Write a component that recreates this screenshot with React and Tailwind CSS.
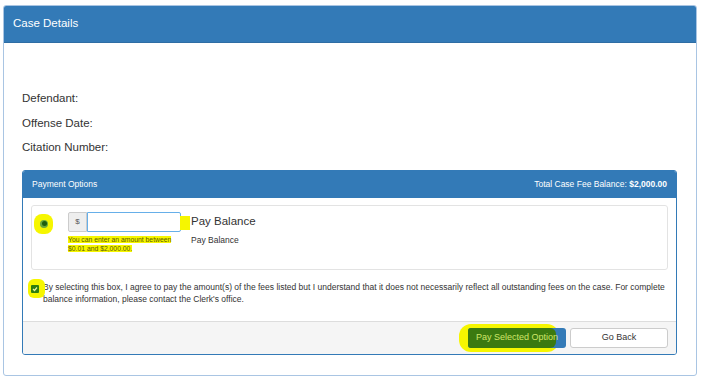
export default function App() {
  return (
    <div className="w-[706px] h-[378px] bg-white pt-[5px] pl-[3px] font-['Liberation_Sans',Arial,sans-serif]">
      <div className="w-[694px] h-[371px] border border-[#a9c5e3] rounded-[3px] overflow-hidden">
        {/* outer header */}
        <div className="h-[37px] bg-[#337ab7] border-b border-[#2e6da4] flex items-center pl-[9px]">
          <span className="text-white text-[11.5px]">Case Details</span>
        </div>

        <div className="pt-[43px] pl-[18px] pr-[19px]">
          <div className="text-[11.5px] text-[#333] leading-[24.5px]">
            <div>Defendant:</div>
            <div>Offense Date:</div>
            <div>Citation Number:</div>
          </div>

          {/* payment options panel */}
          <div className="mt-[10px] border border-[#337ab7] rounded-[3px] overflow-hidden">
            <div className="h-[27px] bg-[#337ab7] flex items-center justify-between px-[9px] text-white text-[8.5px]">
              <span>Payment Options</span>
              <span>
                Total Case Fee Balance: <b>$2,000.00</b>
              </span>
            </div>

            <div className="px-[8px] pt-[7px]">
              <div className="h-[65px] border border-[#e3e3e3] rounded-[3px] flex pt-[6px]">
                {/* radio */}
                <div className="relative w-[36px] shrink-0">
                  <div className="absolute left-[2px] top-[2px] w-[19px] h-[20px] rounded-[8px] bg-[#f6f600]" />
                  <div className="absolute left-[8px] top-[8px] w-[8px] h-[8px] rounded-full bg-[#6aa83c] flex items-center justify-center">
                    <div className="w-[5px] h-[5px] rounded-full bg-[#1f5e0e]" />
                  </div>
                </div>

                {/* amount input */}
                <div className="w-[123px] shrink-0">
                  <div className="relative flex h-[20px]">
                    <div className="w-[19px] bg-[#eeeeee] border border-[#cccccc] rounded-l-[2px] flex items-center justify-center text-[8px] text-[#555]">
                      $
                    </div>
                    <div className="w-[94px] border border-[#66afe9] rounded-r-[2px] bg-white" />
                    <div className="absolute left-[112px] top-[4px] w-[10px] h-[14px] bg-[#f6f600]" />
                  </div>
                  <div className="mt-[3px] text-[6.8px] leading-[9px] text-[#5a5a00]">
                    <span className="bg-[#f6f600]">You can enter an amount between</span>
                    <br />
                    <span className="bg-[#f6f600]">$0.01 and $2,000.00.</span>
                  </div>
                </div>

                <div className="text-[#333]">
                  <div className="text-[11.5px] leading-[17px] mt-[1px]">Pay Balance</div>
                  <div className="text-[8.5px] mt-[4px]">Pay Balance</div>
                </div>
              </div>

              {/* agreement */}
              <div className="flex mt-[11px] pb-[16px]">
                <div className="relative w-[12px] shrink-0">
                  <div className="absolute -left-[3px] -top-[2px] w-[17px] h-[19px] rounded-[6px] bg-[#f6f600]" />
                  <div className="absolute left-[0px] top-[4px] w-[8px] h-[8px] rounded-[1px] bg-[#2e7d0e] flex items-center justify-center">
                    <svg width="6" height="6" viewBox="0 0 6 6">
                      <path d="M1 3 L2.5 4.5 L5 1.5" stroke="#e8f5a0" strokeWidth="1.2" fill="none" />
                    </svg>
                  </div>
                </div>
                <div className="text-[8.5px] leading-[12px] text-[#333]">
                  By selecting this box, I agree to pay the amount(s) of the fees listed but I understand that it does not necessarily reflect all outstanding fees on the case. For complete
                  <br />
                  balance information, please contact the Clerk's office.
                </div>
              </div>
            </div>

            {/* footer */}
            <div className="h-[33px] bg-[#f5f5f5] border-t border-[#dddddd] flex items-center justify-end gap-[4px] pr-[8px]">
              <div className="relative">
                <div className="absolute -left-[9px] -top-[4px] w-[100px] h-[28px] rounded-[12px] bg-[#f6f600]" />
                <div className="relative w-[98px] h-[20px] rounded-[3px] bg-[#337ab7] overflow-hidden">
                  <div className="absolute left-0 top-0 w-[88px] h-[20px] bg-[#3b7a10] rounded-r-[6px]" />
                  <div className="relative h-full flex items-center justify-center text-[9px] text-[#cfe66a]">
                    Pay Selected Option
                  </div>
                </div>
              </div>
              <div className="w-[98px] h-[20px] rounded-[3px] bg-white border border-[#cccccc] flex items-center justify-center text-[9px] text-[#333]">
                Go Back
              </div>
            </div>
          </div>
        </div>
      </div>
    </div>
  );
}
